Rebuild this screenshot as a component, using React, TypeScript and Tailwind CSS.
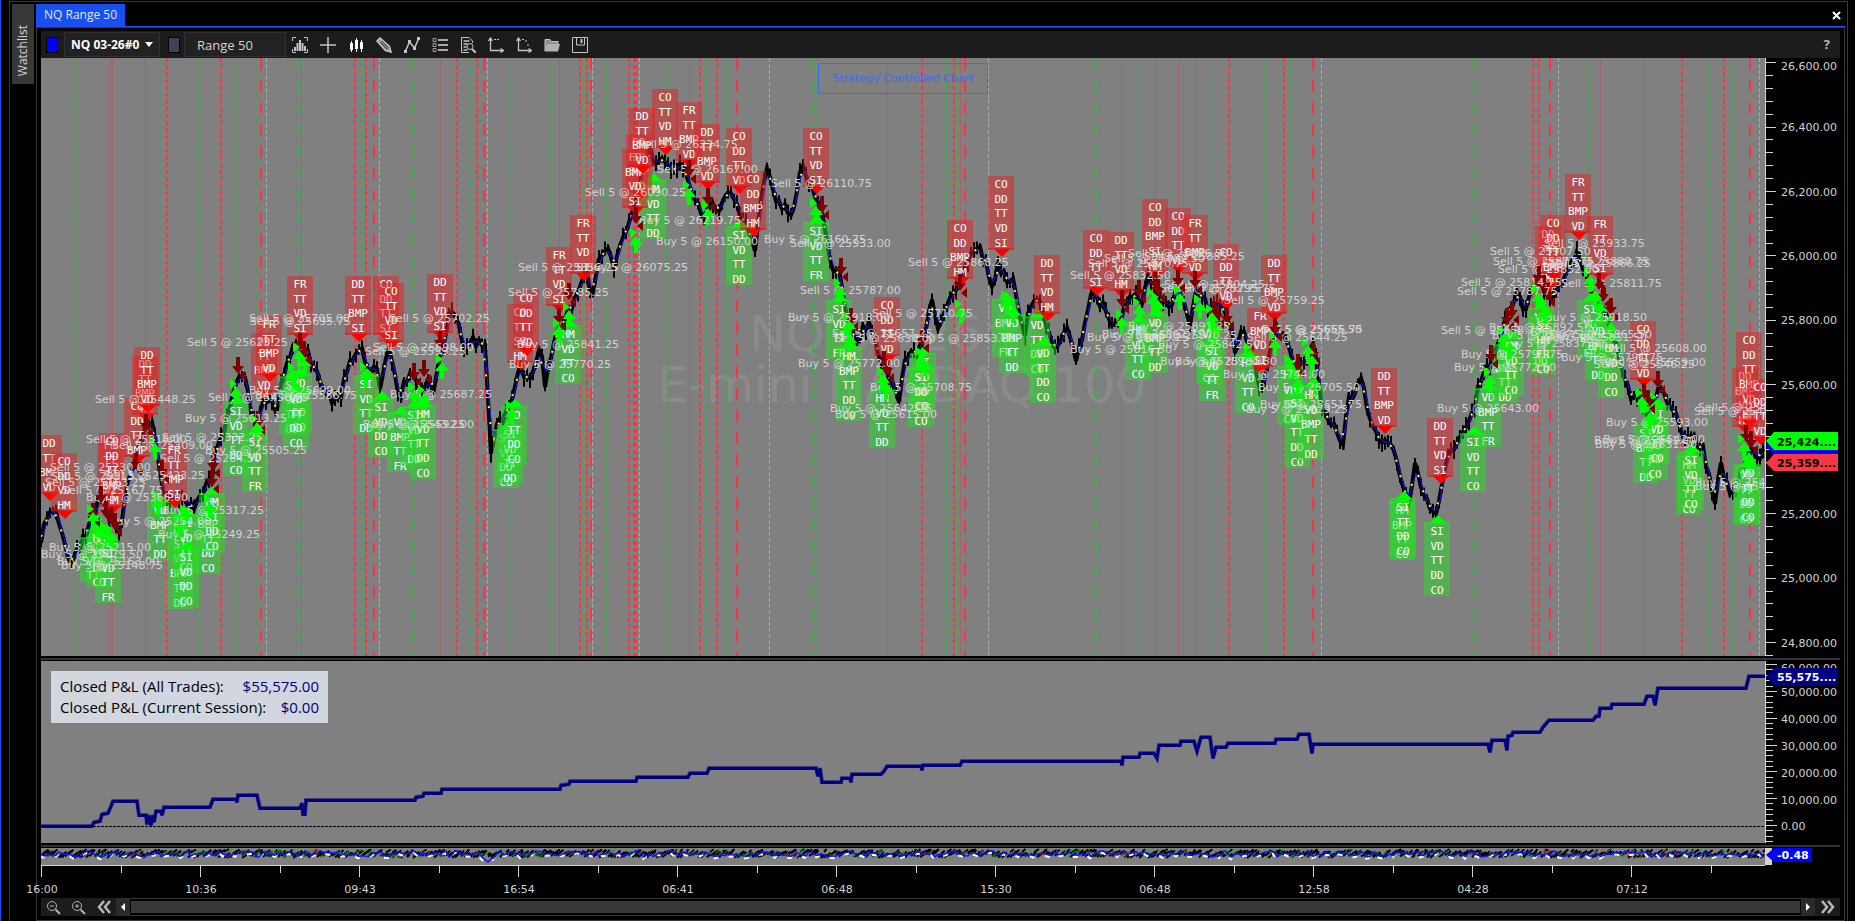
import React from "react";

type Pt = [number, number];
type Box = [number, number, string];
type Trade = [number, number, string];

const SANS = '"DejaVu Sans", Verdana, sans-serif';
const MONO = '"DejaVu Sans Mono", monospace';

const PRICE: Pt[] = [
  [41, 540], [48, 512], [55, 508], [61, 525], [66, 545], [70, 562], [75, 555], [88, 530], [95, 512], [100, 495],
  [105, 500], [110, 520], [120, 533], [127, 490], [132, 470], [140, 445], [148, 420], [153, 428], [158, 455],
  [162, 490], [168, 505], [176, 495], [188, 505], [195, 510], [203, 490], [212, 480], [216, 445], [225, 430],
  [232, 395], [240, 370], [247, 385], [252, 415], [258, 425], [263, 405], [270, 395], [277, 410], [281, 385],
  [288, 355], [295, 348], [302, 340], [310, 360], [318, 375], [325, 390], [332, 400], [340, 398], [347, 370],
  [355, 355], [362, 350], [370, 375], [376, 368], [381, 390], [388, 345], [393, 365], [399, 400], [406, 380],
  [413, 375], [420, 390], [428, 380], [434, 385], [442, 350], [450, 310], [458, 325], [465, 350], [472, 340],
  [480, 345], [485, 345], [488, 400], [491, 455], [497, 425], [503, 420], [510, 405], [520, 370], [528, 380],
  [535, 370], [541, 345], [544, 390], [550, 360], [556, 335], [562, 325], [570, 310], [577, 292], [583, 280],
  [588, 278], [592, 300], [598, 260], [604, 255], [608, 245], [614, 268], [622, 235], [628, 225], [637, 200],
  [643, 165], [650, 150], [656, 165], [663, 155], [670, 165], [676, 175], [682, 162], [690, 190], [698, 205],
  [703, 215], [710, 205], [717, 210], [725, 200], [732, 190], [740, 215], [748, 230], [755, 250], [762, 190],
  [768, 163], [772, 190], [780, 205], [788, 210], [793, 215], [798, 180], [803, 170], [810, 185], [816, 200],
  [822, 215], [830, 260], [835, 275], [838, 260], [843, 300], [850, 325], [856, 340], [863, 330], [870, 320],
  [878, 350], [885, 370], [892, 385], [899, 400], [904, 365], [910, 350], [918, 352], [924, 340], [928, 315],
  [933, 300], [938, 330], [944, 310], [950, 300], [957, 290], [965, 270], [972, 255], [978, 245], [983, 255],
  [989, 275], [993, 285], [998, 262], [1004, 275], [1008, 290], [1013, 280], [1020, 315], [1025, 335],
  [1030, 305], [1037, 295], [1045, 320], [1052, 340], [1057, 350], [1062, 340], [1068, 330], [1075, 360],
  [1080, 345], [1086, 320], [1092, 292], [1098, 300], [1105, 308], [1112, 325], [1120, 320], [1128, 300],
  [1135, 290], [1142, 300], [1148, 275], [1155, 285], [1162, 300], [1170, 310], [1178, 285], [1183, 300],
  [1190, 325], [1197, 290], [1203, 300], [1210, 310], [1220, 305], [1228, 315], [1235, 350], [1242, 330],
  [1250, 345], [1260, 390], [1267, 370], [1274, 330], [1285, 340], [1295, 365], [1305, 360], [1315, 345],
  [1322, 405], [1330, 425], [1336, 430], [1343, 445], [1348, 395], [1354, 400], [1358, 380], [1363, 378],
  [1368, 415], [1375, 430], [1384, 445], [1390, 440], [1398, 470], [1403, 485], [1409, 500], [1415, 465],
  [1422, 490], [1429, 505], [1437, 515], [1443, 480], [1450, 450], [1456, 445], [1462, 430], [1473, 415],
  [1480, 380], [1490, 365], [1498, 340], [1510, 310], [1518, 290], [1525, 315], [1531, 290], [1537, 275],
  [1550, 300], [1557, 290], [1565, 280], [1571, 265], [1577, 252], [1583, 265], [1590, 290], [1600, 305],
  [1610, 325], [1618, 355], [1627, 385], [1633, 400], [1640, 395], [1648, 420], [1655, 400], [1661, 385],
  [1668, 405], [1676, 412], [1684, 440], [1692, 435], [1703, 450], [1710, 480], [1715, 500], [1721, 465],
  [1727, 485], [1734, 495], [1742, 475], [1750, 450], [1760, 455], [1765, 445],
];

const SHORTS: Box[] = [
  [49, 435, "DD TT BMP VD"], [64, 453, "CO DD VD HM"], [110, 437, "FR TT VD SI"], [112, 433, "CO DD TT BMP HM"],
  [145, 356, "DD TT BMP VD"], [137, 398, "CO DD TT BMP"], [147, 347, "DD TT BMP VD"], [174, 442, "FR TT BMP SI"],
  [264, 333, "DD TT BMP VD"], [269, 316, "FR TT BMP VD"], [300, 276, "FR TT VD SI"], [358, 276, "DD TT BMP SI"],
  [386, 276, "CO DD TT SI"], [391, 283, "CO TT VD SI"], [440, 274, "DD TT VD SI"], [520, 304, "CO TT SI HM"],
  [526, 290, "CO DD TT VD"], [559, 247, "FR TT VD SI"], [583, 215, "FR TT VD SI"], [639, 134, "DD FR BMP VD"],
  [635, 149, "FR BMP VD SI"], [642, 108, "DD TT BMP VD"], [665, 89, "CO TT VD HM"], [689, 102, "FR TT BMP VD"],
  [707, 124, "DD TT BMP VD"], [739, 128, "CO DD TT VD"], [753, 171, "CO DD BMP HM"], [816, 128, "CO TT VD SI"],
  [887, 297, "CO DD TT VD"], [960, 220, "CO DD BMP HM"], [1001, 176, "CO DD TT VD SI"], [1047, 255, "DD TT VD HM"],
  [1096, 230, "CO DD TT SI"], [1121, 232, "DD TT VD HM"], [1155, 199, "CO DD BMP SI HM"], [1178, 208, "CO DD TT VD"],
  [1195, 215, "FR TT BMP VD"], [1226, 244, "CO DD TT VD"], [1260, 308, "FR BMP VD SI"], [1274, 255, "DD TT BMP VD"],
  [1384, 368, "DD TT BMP VD"], [1440, 418, "DD TT VD SI"], [1578, 174, "FR TT BMP VD"], [1600, 216, "FR TT VD SI"],
  [1548, 226, "DD TT FR BMP"], [1553, 215, "CO DD TT BMP"], [1643, 321, "CO DD TT VD"], [1745, 368, "DD BMP VD HM"],
  [1749, 332, "CO DD TT BMP VD HM"], [1760, 379, "CO DD TT VD"],
];

const LONGS: Box[] = [
  [93, 538, "SI VD TT"], [99, 530, "HM VD DD CO"], [108, 545, "SI VD TT FR"], [160, 502, "VD BMP TT DD"],
  [180, 521, "HM SI VD BMP TT DD"], [186, 515, "SI VD TT CO"], [186, 549, "SI VD DD CO"], [208, 516, "BMP TT DD CO"],
  [212, 494, "HM SI DD CO"], [236, 403, "SI VD TT DD CO"], [255, 434, "SI VD TT FR"], [292, 377, "SI VD TT DD"],
  [299, 375, "VD BMP DD CO"], [296, 391, "VD TT DD CO"], [366, 376, "SI VD TT DD"], [381, 399, "SI VD DD CO"],
  [400, 414, "VD BMP TT FR"], [414, 407, "SI VD TT DD"], [423, 406, "HM VD TT DD CO"], [506, 430, "SI VD DD CO"],
  [510, 426, "SI VD TT DD"], [514, 407, "VD TT DD CO"], [568, 326, "HM VD TT CO"], [653, 181, "HM VD TT DD"],
  [739, 227, "SI VD TT DD"], [816, 223, "SI VD TT FR"], [839, 301, "SI VD TT FR"], [849, 348, "HM BMP TT DD CO"],
  [882, 390, "HM VD TT DD"], [923, 354, "SI VD DD CO"], [921, 369, "SI DD CO CO"], [1005, 300, "VD BMP TT FR"],
  [1012, 315, "VD BMP TT DD"], [1037, 317, "VD TT DD CO"], [1043, 345, "VD TT DD CO"], [1138, 322, "HM VD TT CO"],
  [1155, 315, "VD BMP TT DD"], [1209, 326, "VD TT DD CO"], [1212, 343, "SI VD TT FR"], [1248, 355, "HM VD TT CO"],
  [1290, 367, "HM VD DD CO"], [1297, 395, "SI VD TT DD CO"], [1311, 387, "HM VD BMP TT DD"], [1402, 502, "HM BMP TT CO"],
  [1403, 499, "SI TT DD CO"], [1437, 523, "SI VD TT DD CO"], [1488, 389, "VD BMP TT FR"], [1473, 434, "SI VD TT CO"],
  [1505, 345, "VD BMP TT DD"], [1511, 338, "HM VD TT CO"], [1541, 309, "VD BMP TT DD"], [1543, 317, "SI HM FR CO"],
  [1590, 301, "SI VD BMP FR"], [1598, 323, "VD BMP TT DD"], [1611, 340, "HM VD DD CO"], [1646, 425, "SI BMP TT DD"],
  [1655, 422, "SI VD DD CO"], [1657, 406, "SI VD TT CO"], [1689, 457, "HM VD TT CO"], [1691, 452, "SI VD TT CO"],
  [1746, 467, "VD TT DD CO"], [1748, 465, "VD TT DD CO"],
];

const TRADES: Trade[] = [
  [95, 399, "Sell 5 @ 25448.25"], [86, 439, "Sell 5 @ 25316.00"], [112, 445, "Sell 5 @ 25309.00"],
  [162, 437, "Sell 5 @ 25332.25"], [160, 458, "Sell 5 @ 25264.50"], [205, 450, "Buy 5 @ 25505.25"],
  [185, 418, "Buy 5 @ 25613.25"], [50, 467, "Sell 5 @ 25230.00"], [51, 476, "Sell 5 @ 25213.25"],
  [104, 475, "Sell 5 @ 25423.25"], [45, 482, "Sell 5 @ 25163.25"], [62, 490, "Sell 5 @ 25167.75"],
  [86, 497, "Buy 5 @ 25366.00"], [162, 510, "Buy 5 @ 25317.25"], [109, 521, "Buy 5 @ 25254.00"],
  [158, 534, "Buy 5 @ 25249.25"], [49, 547, "Buy 5 @ 25215.00"], [41, 554, "Buy 5 @ 25179.50"],
  [57, 561, "Buy 5 @ 25163.00"], [61, 565, "Buy 5 @ 25148.75"], [187, 342, "Sell 5 @ 25623.25"],
  [208, 397, "Sell 5 @ 25458.75"], [249, 390, "Buy 5 @ 25699.00"], [255, 395, "Buy 5 @ 25586.75"],
  [249, 318, "Sell 5 @ 25705.00"], [250, 321, "Sell 5 @ 25695.75"], [389, 318, "Sell 5 @ 25702.25"],
  [373, 347, "Sell 5 @ 25698.00"], [365, 351, "Sell 5 @ 25599.25"], [390, 394, "Buy 5 @ 25687.25"],
  [363, 424, "Buy 5 @ 25543.25"], [372, 424, "Buy 5 @ 25592.00"], [508, 292, "Sell 5 @ 25785.25"],
  [518, 267, "Sell 5 @ 25856.25"], [517, 344, "Buy 5 @ 25841.25"], [509, 364, "Buy 5 @ 25770.25"],
  [586, 267, "Buy 5 @ 26075.25"], [585, 192, "Sell 5 @ 26090.25"], [637, 144, "Sell 5 @ 26234.75"],
  [657, 169, "Sell 5 @ 26167.00"], [639, 220, "Buy 5 @ 26219.75"], [656, 241, "Buy 5 @ 26150.00"],
  [771, 183, "Sell 5 @ 26110.75"], [764, 239, "Buy 5 @ 26160.75"], [790, 243, "Sell 5 @ 25933.00"],
  [800, 290, "Sell 5 @ 25787.00"], [788, 317, "Buy 5 @ 25918.00"], [872, 313, "Sell 5 @ 25710.75"],
  [832, 333, "Sell 5 @ 25657.25"], [835, 338, "Sell 5 @ 25630.00"], [798, 363, "Buy 5 @ 25772.00"],
  [870, 387, "Buy 5 @ 25708.75"], [913, 338, "Buy 5 @ 25853.25"], [830, 408, "Buy 5 @ 25642.25"],
  [835, 414, "Buy 5 @ 25615.00"], [908, 262, "Sell 5 @ 25868.25"], [1070, 275, "Sell 5 @ 25832.50"],
  [1088, 263, "Sell 5 @ 25870.75"], [1144, 256, "Sell 5 @ 25885.25"], [1128, 253, "Sell 5 @ 25896.50"],
  [1104, 258, "Sell 5 @ 25882.50"], [1164, 284, "Sell 5 @ 25804.25"], [1160, 288, "Sell 5 @ 25782.75"],
  [1175, 288, "Sell 5 @ 25795.75"], [1224, 300, "Sell 5 @ 25759.25"], [1247, 337, "Sell 5 @ 25644.25"],
  [1261, 329, "Sell 5 @ 25655.50"], [1262, 329, "Sell 5 @ 25666.75"], [1128, 326, "Buy 5 @ 25891.25"],
  [1102, 334, "Buy 5 @ 25862.75"], [1087, 337, "Buy 5 @ 25879.25"], [1135, 335, "Buy 5 @ 25870.25"],
  [1158, 344, "Buy 5 @ 25842.50"], [1070, 349, "Buy 5 @ 25816.50"], [1160, 361, "Buy 5 @ 25789.50"],
  [1175, 361, "Buy 5 @ 25781.50"], [1223, 374, "Buy 5 @ 25744.00"], [1258, 387, "Buy 5 @ 25705.50"],
  [1260, 404, "Buy 5 @ 25651.75"], [1246, 409, "Buy 5 @ 25629.25"], [1544, 243, "Sell 5 @ 25933.75"],
  [1490, 251, "Sell 5 @ 25907.50"], [1493, 261, "Sell 5 @ 25877.75"], [1548, 261, "Sell 5 @ 25880.75"],
  [1550, 263, "Sell 5 @ 25866.25"], [1498, 269, "Sell 5 @ 25852.00"], [1461, 282, "Sell 5 @ 25814.75"],
  [1457, 291, "Sell 5 @ 25787.75"], [1561, 283, "Sell 5 @ 25811.75"], [1545, 317, "Buy 5 @ 25918.50"],
  [1489, 327, "Buy 5 @ 25892.50"], [1441, 330, "Sell 5 @ 25658.75"], [1550, 334, "Buy 5 @ 25865.50"],
  [1492, 335, "Buy 5 @ 25867.50"], [1545, 337, "Buy 5 @ 25851.50"], [1502, 343, "Buy 5 @ 25837.50"],
  [1461, 354, "Buy 5 @ 25790.75"], [1454, 367, "Buy 5 @ 25772.50"], [1561, 357, "Buy 5 @ 25791.75"],
  [1606, 348, "Sell 5 @ 25608.00"], [1605, 362, "Sell 5 @ 25559.00"], [1594, 364, "Sell 5 @ 25546.25"],
  [1437, 408, "Buy 5 @ 25643.00"], [1606, 422, "Buy 5 @ 25593.00"], [1594, 440, "Buy 5 @ 25541.00"],
  [1603, 439, "Buy 5 @ 25542.00"], [1595, 444, "Buy 5 @ 25531.50"], [1698, 407, "Sell 5 @ 25448.00"],
  [1694, 411, "Sell 5 @ 25434.00"], [1695, 482, "Buy 5 @ 25461.00"], [1695, 486, "Buy 5 @ 25453.00"],
];

/* Tip positions of the execution arrows. */
const DOWN_ARROWS: Pt[] = [
  [93, 520], [101, 503], [106, 518], [111, 524], [115, 530], [136, 470], [146, 431], [162, 477], [212, 487], [213, 471],
  [238, 374], [258, 428], [300, 350], [304, 358], [414, 380], [424, 377], [440, 348], [559, 324], [569, 300], [636, 224], [689, 177],
  [708, 205], [822, 213], [841, 275], [851, 325], [884, 368], [887, 376], [922, 346], [960, 291], [1122, 307], [1139, 297],
  [1155, 289], [1158, 296], [1178, 286], [1195, 288], [1213, 318], [1217, 322], [1227, 324], [1275, 335], [1298, 371], [1313, 360],
  [1491, 362], [1507, 325], [1512, 318], [1539, 283], [1544, 292], [1548, 300], [1599, 290], [1603, 302], [1611, 315],
  [1644, 400], [1648, 407], [1658, 388], [1746, 442], [1751, 448],
];
const UP_ARROWS: Pt[] = [
  [93, 512], [97, 520], [102, 522], [107, 530], [112, 532], [155, 443], [158, 498], [180, 520], [186, 512], [210, 502],
  [236, 387], [257, 422], [294, 370], [299, 350], [305, 357], [366, 370], [414, 390], [424, 393], [442, 362], [512, 408],
  [559, 326], [569, 310], [636, 236], [689, 188], [708, 208], [816, 206], [840, 286], [849, 320], [850, 334],
  [883, 374], [886, 382], [921, 354], [925, 359], [961, 307], [1007, 298], [1013, 306], [1122, 317], [1139, 305],
  [1153, 295], [1158, 300], [1180, 293], [1200, 302], [1212, 312], [1215, 324], [1250, 350], [1275, 339], [1290, 362],
  [1298, 378], [1308, 345], [1312, 355], [1315, 378], [1490, 375], [1504, 333], [1510, 342], [1538, 292], [1546, 306],
  [1590, 275], [1595, 290], [1600, 302], [1611, 322], [1642, 396], [1650, 412], [1656, 400], [1744, 442], [1749, 452],
];

type Mark = { at: number; x: number; y: number; kind: "down" | "up" | "text"; label?: string };

/* Executions are stacked so that earlier bars lie over later ones. */
const MARKS: Mark[] = [
  ...DOWN_ARROWS.map(([x, y]): Mark => ({ at: x, x, y, kind: "down" })),
  ...UP_ARROWS.map(([x, y]): Mark => ({ at: x, x, y, kind: "up" })),
  ...TRADES.map(([x, y, label]): Mark => ({ at: x + 49, x, y, kind: "text", label })),
].sort((a, b) => b.at - a.at);

const RED_DOTS = [167, 221, 355, 366, 457, 477, 580, 587, 629, 634, 636, 700, 717, 922, 954, 1229, 1284, 1533, 1539, 1682, 1724];
const RED_DASH = [261, 374, 484, 591, 737, 965, 1313, 1550, 1750];
const GREEN_DOTS = [75, 199, 234, 363, 471, 551, 585, 607, 667, 707, 727, 946, 956, 1264, 1291, 1589, 1708, 1732];
const GREEN_DASH = [299, 413, 813, 1097, 1475];
const SESSION = [266, 379, 487, 592, 639, 769, 988, 1321, 1558, 1759];
const FAINT_RED = [110, 112, 145, 301, 440, 559, 689, 887, 960, 1121, 1155, 1178, 1195, 1600, 1643];
const FAINT_GREEN = [99, 160, 256, 510, 653, 816, 881, 1138, 1210, 1487, 1655, 1747];

const EQUITY: Pt[] = [
  [41, 826], [92, 826], [94, 822], [100, 821], [102, 814], [108, 813], [111, 806], [113, 801], [137, 801], [139, 815],
  [146, 815], [147, 824], [149, 815], [151, 825], [153, 815], [154, 822], [156, 811], [161, 811], [162, 815],
  [164, 807], [210, 807], [213, 799], [236, 799], [237, 802], [238, 795], [257, 795], [260, 808], [300, 808],
  [302, 803], [303, 814], [305, 814], [306, 800], [415, 800], [416, 797], [423, 796], [424, 793], [441, 793],
  [442, 789], [560, 789], [561, 785], [569, 784], [570, 781], [636, 781], [637, 777], [688, 777], [690, 773],
  [707, 773], [709, 768], [816, 768], [818, 776], [820, 768], [822, 782], [841, 782], [842, 778], [850, 778],
  [851, 782], [852, 774], [881, 774], [884, 771], [887, 766], [921, 766], [922, 770], [923, 765], [960, 765],
  [962, 761], [1121, 761], [1122, 765], [1123, 757], [1139, 757], [1140, 753], [1154, 753], [1157, 758],
  [1159, 745], [1180, 745], [1181, 741], [1194, 741], [1197, 751], [1201, 737], [1210, 737], [1213, 758],
  [1216, 747], [1226, 747], [1228, 743], [1275, 743], [1276, 739], [1297, 739], [1299, 734], [1309, 734],
  [1312, 753], [1313, 744], [1488, 744], [1490, 752], [1492, 740], [1505, 740], [1507, 750], [1508, 736],
  [1512, 735], [1513, 732], [1540, 732], [1543, 727], [1549, 720], [1593, 720], [1596, 716], [1599, 716],
  [1600, 708], [1611, 708], [1612, 704], [1644, 704], [1647, 696], [1653, 696], [1655, 705], [1658, 688],
  [1746, 688], [1749, 676], [1765, 676],
];

const TIMES = ["16:00", "10:36", "09:43", "16:54", "06:41", "06:48", "15:30", "06:48", "12:58", "04:28", "07:12"];

function noise(n: number) {
  const s = Math.sin(n * 127.1 + 311.7) * 43758.5453;
  return s - Math.floor(s);
}

function priceAt(x: number) {
  let i = 1;
  while (i < PRICE.length - 1 && PRICE[i][0] < x) i++;
  const [x0, y0] = PRICE[i - 1];
  const [x1, y1] = PRICE[i];
  return y0 + ((y1 - y0) * (x - x0)) / (x1 - x0);
}

const xs = Array.from({ length: 575 }, (_, i) => 41 + i * 3);
const mids = xs.map((x, i) => priceAt(x) + (noise(i) - 0.5) * 9);
const closePath = xs.map((x, i) => `${i ? "L" : "M"}${x} ${mids[i].toFixed(1)}`).join("");
const barsPath = xs
  .map((x, i) => `M${x} ${(mids[i] - 3 - noise(i + 900) * 7).toFixed(1)}V${(mids[i] + 3 + noise(i + 1900) * 7).toFixed(1)}`)
  .join("");
const averagePath = xs
  .map((x, i) => {
    const a = mids[Math.max(0, i - 1)];
    const c = mids[Math.min(mids.length - 1, i + 1)];
    return `${i ? "L" : "M"}${x} ${((a + mids[i] + c) / 3).toFixed(1)}`;
  })
  .join("");

const toPath = (pts: Pt[]) => pts.map(([x, y], i) => `${i ? "L" : "M"}${x} ${y}`).join("");

function VLines({ list, color, width, dash, opacity = 1 }: { list: number[]; color: string; width: number; dash?: string; opacity?: number }) {
  const shift = width % 2 ? 0.5 : 0;
  return (
    <g stroke={color} strokeWidth={width} strokeDasharray={dash} opacity={opacity}>
      {list.map((x) => (
        <line key={x} x1={x + shift} x2={x + shift} y1={58} y2={656} />
      ))}
    </g>
  );
}

function SignalBox({ box, short }: { box: Box; short: boolean }) {
  const [x, y, text] = box;
  const rows = text.split(" ");
  const h = Math.round(rows.length * 14.6);
  const base = short ? y + h : y;
  const color = short ? "#ff0000" : "#00ff00";
  return (
    <g>
      <rect x={x - 13} y={y} width={26} height={h} fill={short ? "#e22222" : "#22e222"} opacity={0.5} />
      {rows.map((r, i) => (
        <text key={i} x={x} y={y + 12 + Math.round(i * 14.7)} textAnchor="middle" fill="#ffffff" fontSize={11} fontFamily={MONO}>
          {r}
        </text>
      ))}
      <path d={`M${x - 13} ${base}H${x + 13}`} stroke={color} />
      <path d={short ? `M${x - 7} ${base}h16l-8 8z` : `M${x - 7} ${base}h16l-8 -8z`} fill={color} />
    </g>
  );
}

function Execution({ mark }: { mark: Mark }) {
  const { x, y, kind, label } = mark;
  if (kind === "text") {
    return <text x={x} y={y + 4} fill="#d3d3d3" fontFamily={SANS} fontSize={11}>{label}</text>;
  }
  return kind === "down" ? (
    <path fill="#800000" d={`M${x - 2} ${y - 17}h4v9h4l-6 8l-6 -8h4zM${x + 7} ${y - 3}v10l-6 -5z`} />
  ) : (
    <path fill="#00ff00" d={`M${x} ${y}l7 9h-5v8h-4v-8h-5zM${x - 6} ${y - 8}v10l7 -5z`} />
  );
}

function PriceChart() {
  return (
    <svg className="block h-full w-full" viewBox="41 58 1724 598" preserveAspectRatio="xMinYMin slice" role="img" aria-label="NQ Range 50 price chart">
      <g fill="#8b8b8b" fontFamily={SANS} fontSize={49} textAnchor="middle">
        <text x={902} y={351}>NQ 03-26#0</text>
        <text x={902} y={402}>E-mini NASDAQ 100</text>
      </g>
      <VLines list={FAINT_RED} color="#d04050" width={1} opacity={0.4} />
      <VLines list={FAINT_GREEN} color="#30b040" width={1} opacity={0.25} />
      <VLines list={SESSION} color="#a9a9a9" width={1} dash="4 2" />
      <VLines list={GREEN_DOTS} color="#3cb043" width={2} dash="4 3" />
      <VLines list={GREEN_DASH} color="#3cb043" width={2} dash="12 10" />
      <VLines list={RED_DOTS} color="#ff3340" width={2} dash="4 3" />
      <VLines list={RED_DASH} color="#ff3340" width={2} dash="12 10" />
      <g stroke="#000000" fill="none">
        <path d={closePath} strokeWidth={4} />
        <path d={barsPath} strokeWidth={2} />
      </g>
      <path d={averagePath} stroke="#1414ff" strokeWidth={1} fill="none" transform="translate(1 0)" />
      <path d={averagePath} stroke="#ffff00" strokeWidth={2} fill="none" strokeDasharray="2 14" />
      {LONGS.map((b, i) => <SignalBox key={i} box={b} short={false} />)}
      {SHORTS.map((b, i) => <SignalBox key={i} box={b} short />)}
      {MARKS.map((m, i) => <Execution key={i} mark={m} />)}
    </svg>
  );
}

function PriceAxis() {
  const majors = Array.from({ length: 10 }, (_, i) => ({ y: 62.6 + i * 64.45, v: 26600 - i * 200 }));
  return (
    <svg className="block h-full w-full" viewBox="1765 58 75 598" preserveAspectRatio="xMinYMin slice">
      <path d="M1765.5 58V656" stroke="#d3d3d3" />
      {majors.map(({ y, v }, i) => (
        <g key={v} stroke="#d3d3d3">
          <path d={`M1766 ${Math.floor(y) + 0.5}h10`} />
          {[1, 2, 3, 4].map((k) => (
            <path key={k} d={`M1766 ${Math.floor(y + k * 12.89) + 0.5}h7`} />
          ))}
          <text x={1781} y={Math.round(y) + (i ? 4 : 7)} fill="#d3d3d3" stroke="none" fontFamily={SANS} fontSize={11}>
            {`${v.toLocaleString("en-US")}.00`}
          </text>
        </g>
      ))}
      <path d="M1766 446l7 -8h65v16h-65z" fill="#0000ff" />
      <path d="M1766 441l8 -9h64v18h-64z" fill="#00ff00" />
      <path d="M1766 463l8 -9h64v17h-64z" fill="#f83644" />
      <g fontFamily={SANS} fontSize={11} fontWeight={700} fill="#000000">
        <text x={1777} y={446}>25,424....</text>
        <text x={1777} y={467}>25,359....</text>
      </g>
    </svg>
  );
}

function EquityChart() {
  return (
    <svg className="block h-full w-full" viewBox="41 661 1724 182" preserveAspectRatio="xMinYMin slice" role="img" aria-label="Closed profit and loss">
      <path d="M41 826.5H1765" stroke="#000000" strokeDasharray="3 1" />
      <path d={toPath(EQUITY)} stroke="#000080" strokeWidth={3} fill="none" transform="translate(0 0.5)" />
      <path d={toPath(EQUITY)} stroke="#000080" strokeWidth={4} fill="none" opacity={0.5} />
    </svg>
  );
}

function EquityAxis() {
  const rows = Array.from({ length: 7 }, (_, i) => ({ v: 60000 - i * 10000, y: 664.6 + i * 26.8 }));
  return (
    <svg className="block h-full w-full" viewBox="1765 661 75 182" preserveAspectRatio="xMinYMin slice">
      <path d="M1765.5 661V843" stroke="#d3d3d3" />
      {rows.map(({ v, y }) => (
        <g key={v} stroke="#d3d3d3">
          <path d={`M1766 ${Math.floor(y) + 0.5}h11`} />
          {[1, 2, 3, 4].map((k) => (
            <path key={k} d={`M1766 ${Math.floor(y + k * 5.36) + 0.5}h7`} />
          ))}
          <text x={1781} y={Math.round(y) + (v === 60000 ? 7 : 5)} fill="#d3d3d3" stroke="none" fontFamily={SANS} fontSize={11}>
            {v ? `${v.toLocaleString("en-US")}.00` : "0.00"}
          </text>
        </g>
      ))}
      <path d="M1766 677l8 -9h64v17h-64z" fill="#000080" />
      <text x={1777} y={681} fontFamily={SANS} fontSize={11} fontWeight={700} fill="#ffffff">55,575....</text>
    </svg>
  );
}

const strokesFor = (seed: number, density: number) =>
  Array.from({ length: 575 }, (_, i) => {
    if (noise(i + seed) > density) return "";
    const x = 41 + i * 3;
    const y = 858 - noise(i + seed * 2) * 6;
    return `M${x} ${y.toFixed(1)}l${(2 + noise(i + seed * 3) * 3).toFixed(1)} -3`;
  }).join("");

const oscPath = Array.from({ length: 575 }, (_, i) => {
  const dip = Math.abs(i - 149) < 3 ? (3 - Math.abs(i - 149)) * 3 : 0;
  const wave = (noise(Math.floor(i / 2) + 77) - 0.5) * 4 + (noise(i + 500) - 0.5) * 3;
  return `${i ? "L" : "M"}${41 + i * 3} ${(854 + wave + dip).toFixed(1)}`;
}).join("");

function Oscillator() {
  return (
    <svg className="block h-full w-full" viewBox="41 848 1724 17" preserveAspectRatio="xMinYMin slice" role="img" aria-label="Oscillator">
      <g fill="none" strokeWidth={2}>
        <path d={strokesFor(11, 1)} stroke="#000000" />
        <path d={strokesFor(31, 0.8)} stroke="#000000" />
        <path d={strokesFor(71, 0.55)} stroke="#00b400" strokeWidth={1} />
        <path d={strokesFor(91, 0.06)} stroke="#ff2020" strokeWidth={1} />
        <path d={oscPath} stroke="#ffffff" strokeDasharray="5 11" transform="translate(-1 2)" />
        <path d={oscPath} stroke="#1010ff" strokeWidth={1.5} />
      </g>
    </svg>
  );
}

function TimeAxis() {
  return (
    <svg className="block h-full w-full overflow-visible" viewBox="41 865 1799 33" preserveAspectRatio="xMinYMin slice">
      <path d="M41 865.5H1765" stroke="#d3d3d3" />
      {TIMES.map((t, i) => {
        const x = 41 + i * 159;
        return (
          <g key={i} stroke="#d3d3d3">
            <path d={`M${x + 0.5} 866V877M${x + 80.5} 866V873`} />
            <text x={x + 1} y={893} textAnchor="middle" fill="#d3d3d3" stroke="none" fontFamily={SANS} fontSize={11}>{t}</text>
          </g>
        );
      })}
    </svg>
  );
}

function Icon({ children }: { children: React.ReactNode }) {
  return (
    <svg width="16" height="16" viewBox="0 0 16 16" fill="none" stroke="#c4c4c4" strokeWidth="1">
      {children}
    </svg>
  );
}

const TOOLS: { label: string; icon: React.ReactNode }[] = [
  {
    label: "Zoom to data",
    icon: <><path d="M.500 4V.500H4M12 .500h3.500V4M15.500 12v3.500H12M4 15.500H.500V12" /><path d="M3 10v4M5.500 6v8M8 3v11M10.500 6v8M13 9v5" strokeWidth="2" /></>,
  },
  { label: "Crosshair", icon: <path d="M8 0v16M0 8h16" strokeWidth="1.500" /> },
  {
    label: "Chart style",
    icon: <><path d="M3.500 4v11M8.500 1v14M13.500 3v12" stroke="#ffffff" /><path d="M3.500 6v7M8.500 3v9M13.500 5v7" stroke="#ffffff" strokeWidth="3" /></>,
  },
  {
    label: "Drawing tools",
    icon: <><path d="M1 4L4 1L13.500 9.500L15 15L9.500 13.500Z" fill="#8a8a8a" strokeWidth="1.500" /><path d="M4 5l7 7M5.500 3.500l7 7" stroke="#3a3a3a" /><path d="M2.500 6L6 2.500" /></>,
  },
  {
    label: "Indicators",
    icon: <><path d="M1.500 14L5.500 5L10.500 11L14.500 2" strokeWidth="1.500" /><path d="M0 13h3v3h-3zM4 3h3v3h-3zM9 10h3v3h-3zM13 0h3v3h-3z" fill="#c4c4c4" stroke="none" /></>,
  },
  {
    label: "Properties",
    icon: <><path d="M1 1.500h3v3h-3zM1 6.500h3v3h-3zM1 11.500h3v3h-3z" stroke="#9a9a9a" /><path d="M6 3h10M6 8h10M6 13h10" stroke="#a8a8a8" strokeWidth="2" /></>,
  },
  {
    label: "Data box",
    icon: <><path d="M9 15.500H1.500V.500H9L12.500 4V6" /><path d="M3.500 4h6M3.500 7h4M3.500 10h3M3.500 13h4" strokeWidth="1.500" /><circle cx="10" cy="9.500" r="3" /><path d="M12 12l4 4" strokeWidth="2" /></>,
  },
  { label: "Fixed scale", icon: <><path d="M2.500 2V13.500H15M.500 4L2.500 1L4.500 4M12.500 11.500L15.500 13.500L12.500 15.500" strokeWidth="1.300" /><path d="M6 2.500h5" strokeDasharray="2 1" /></> },
  { label: "Auto scale", icon: <><path d="M2.500 2V13.500H15M.500 4L2.500 1L4.500 4M12.500 11.500L15.500 13.500L12.500 15.500" strokeWidth="1.300" /><path d="M6 2.500h2M9 4h2M12 7v2" /></> },
  { label: "Open template", icon: <><path d="M1 14V2.500h5l1 2h7v2.500" fill="#8c8c8c" /><path d="M.500 14.500L3 7H16L14 14.500Z" fill="#b0b0b0" stroke="none" /></> },
  { label: "Save", icon: <><path d="M.500 .500h15v15H.500zM4.500 .500v7.500h8V.500" /><path d="M9.500 2v4" strokeWidth="2" /></> },
];

function Toolbar() {
  return (
    <div className="flex h-[27px] shrink-0 items-center bg-[#1c1c1c] pl-[5px] font-['Open_Sans',sans-serif] text-[13px]">
      <button aria-label="Link instrument" className="h-4 w-3 border border-black bg-[#0000ff]" />
      <label className="relative ml-[6px] flex h-[25px] w-24 items-center border border-[#303030] bg-[#222222]">
        <select aria-label="Instrument" className="h-full w-full appearance-none bg-transparent pl-[6px] text-[12px] font-bold text-white outline-none">
          <option>NQ 03-26#0</option>
        </select>
        <svg className="pointer-events-none absolute right-[6px]" width="8" height="5" viewBox="0 0 8 5"><path d="M0 0h8l-4 5z" fill="#ffffff" /></svg>
      </label>
      <button aria-label="Link interval" className="ml-2 h-4 w-3 border border-black bg-[#3e4257]" />
      <input aria-label="Interval" defaultValue="Range 50" className="ml-1 h-[25px] w-[102px] border border-[#303030] bg-[#222222] pl-3 text-[13px] text-[#d3d3d3] outline-none" />
      <div className="flex">
        {TOOLS.map((t) => (
          <button key={t.label} aria-label={t.label} className="flex h-[27px] w-7 items-center justify-center">
            <Icon>{t.icon}</Icon>
          </button>
        ))}
      </div>
      <button aria-label="Help" className="ml-auto mr-[10px] text-[13px] font-bold text-[#b8b8b8]">?</button>
    </div>
  );
}

function Divider() {
  return (
    <div className="flex h-[5px] shrink-0 items-center bg-black">
      <div className="h-[2px] w-full bg-[#333333]" />
    </div>
  );
}

function ScrollRow() {
  return (
    <div className="flex h-[18px] shrink-0 bg-[#1c1c1c]">
      <button aria-label="Zoom out" className="flex w-6 items-center justify-center">
        <svg width="15" height="15" viewBox="0 0 15 15" fill="none" stroke="#b0b0b0"><circle cx="6" cy="6" r="4.500" /><path d="M4 6h4" /><path d="M9.500 9.500l4.500 4.500" strokeWidth="2" /></svg>
      </button>
      <button aria-label="Zoom in" className="flex w-[26px] items-center justify-center">
        <svg width="15" height="15" viewBox="0 0 15 15" fill="none" stroke="#b0b0b0"><circle cx="6" cy="6" r="4.500" /><path d="M4 6h4M6 4v4" /><path d="M9.500 9.500l4.500 4.500" strokeWidth="2" /></svg>
      </button>
      <button aria-label="Jump to start" className="flex w-[25px] items-center justify-center">
        <svg width="14" height="14" viewBox="0 0 14 14" fill="none" stroke="#b8b8b8" strokeWidth="2.500"><path d="M7 1L2 7L7 13M13 1L8 7L13 13" /></svg>
      </button>
      <button aria-label="Scroll left" className="flex w-[14px] items-center justify-center bg-[#2b2b2b]">
        <svg width="4" height="8" viewBox="0 0 4 8"><path d="M4 0v8L0 4z" fill="#ffffff" /></svg>
      </button>
      <div role="scrollbar" aria-controls="charts" aria-orientation="horizontal" aria-valuenow={100} className="flex flex-1 border-y border-[#383838] bg-black px-[1px] py-[2px]">
        <div className="h-full w-full bg-[#383838]" />
      </div>
      <button aria-label="Scroll right" className="flex w-[14px] items-center justify-center bg-[#2b2b2b]">
        <svg width="4" height="8" viewBox="0 0 4 8"><path d="M0 0v8l4 -4z" fill="#ffffff" /></svg>
      </button>
      <button aria-label="Jump to end" className="flex w-[25px] items-center justify-center">
        <svg width="14" height="14" viewBox="0 0 14 14" fill="none" stroke="#b8b8b8" strokeWidth="2.500"><path d="M1 1L6 7L1 13M7 1L12 7L7 13" /></svg>
      </button>
    </div>
  );
}

export default function App() {
  return (
    <div className="flex h-screen overflow-hidden border-l border-[#1c4ef0] bg-black pl-2 pr-[7px] pt-[1px]">
      <div className="flex min-w-0 flex-1 gap-[2px] border-x border-t border-[#383838] px-[2px] pt-[2px]">
        <button className="flex h-20 w-[22px] shrink-0 items-end justify-center bg-[#383838] pb-[8px] font-['Open_Sans',sans-serif] text-[12px] leading-[22px] text-[#d3d3d3]">
          <span className="rotate-180 [writing-mode:vertical-rl]">Watchlist</span>
        </button>
        <main className="flex min-w-0 flex-1 flex-col">
          <header className="flex h-[23px] shrink-0 items-center justify-between border-b border-[#1c4ef0]">
            <button className="h-full bg-[#1750ee] px-2 font-['Open_Sans',sans-serif] text-[12px] text-[#e0e6f5]">NQ Range 50</button>
            <button aria-label="Close" className="p-1">
              <svg width="9" height="9" viewBox="0 0 9 9"><path d="M1 1l7 7M8 1l-7 7" stroke="#ffffff" strokeWidth="2" /></svg>
            </button>
          </header>
          <section className="flex min-h-0 flex-1 flex-col border border-[#383838] px-1 pb-1 pt-[3px]">
            <Toolbar />
            <div id="charts" className="flex min-h-0 flex-1">
              <div className="relative min-w-0 flex-1 bg-[#808080]">
                <PriceChart />
                <div className="absolute inset-x-0 top-[5px] flex justify-center">
                  <div className="flex h-[31px] w-[170px] items-center justify-center rounded-[2px] border border-[#3b6cf0] pt-[2px] font-['DejaVu_Sans',sans-serif] text-[11px] text-[#3b6cf0]">
                    Strategy Controlled Chart
                  </div>
                </div>
              </div>
              <div className="w-[75px] shrink-0"><PriceAxis /></div>
            </div>
            <Divider />
            <div className="flex h-[182px] shrink-0">
              <div className="relative min-w-0 flex-1 bg-[#808080]">
                <EquityChart />
                <dl className="absolute left-[10px] top-[10px] w-[277px] whitespace-nowrap bg-[#d2d6df] px-[9px] py-[5px] font-['Open_Sans',sans-serif] text-[15px] leading-[21px] text-black">
                  <div className="flex justify-between">
                    <dt>Closed P&amp;L (All Trades):</dt>
                    <dd className="text-[#000080]">$55,575.00</dd>
                  </div>
                  <div className="flex justify-between">
                    <dt>Closed P&amp;L (Current Session):</dt>
                    <dd className="text-[#000080]">$0.00</dd>
                  </div>
                </dl>
              </div>
              <div className="w-[75px] shrink-0"><EquityAxis /></div>
            </div>
            <Divider />
            <div className="flex h-[17px] shrink-0">
              <div className="min-w-0 flex-1 bg-[#808080]"><Oscillator /></div>
              <div className="w-[75px] shrink-0">
                <svg className="block h-full w-full" viewBox="1765 848 75 17">
                  <path d="M1765 848h7v17h-7z" fill="#d3d3d3" />
                  <path d="M1766 855l8 -7h38v14h-38z" fill="#0000ff" />
                  <text x={1777} y={859} fontFamily={SANS} fontSize={11} fontWeight={700} fill="#ffffff">-0.48</text>
                </svg>
              </div>
            </div>
            <div className="h-[33px] shrink-0"><TimeAxis /></div>
            <ScrollRow />
          </section>
        </main>
      </div>
    </div>
  );
}
